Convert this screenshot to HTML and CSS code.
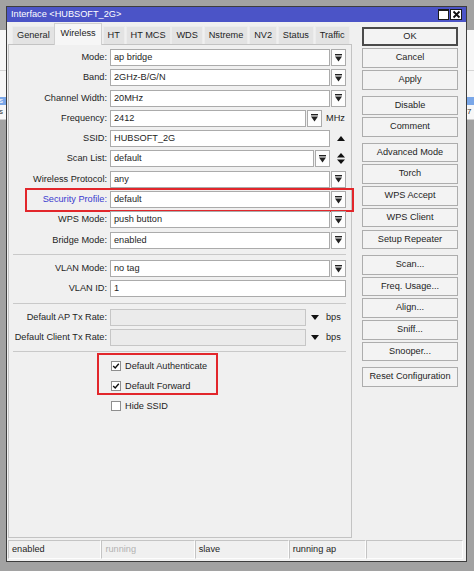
FILE: index.html
```html
<!DOCTYPE html>
<html>
<head>
<meta charset="utf-8">
<title>Interface &lt;HUBSOFT_2G&gt;</title>
<link rel="stylesheet" href="styles.css">
</head>
<body>
<div class="screen">
  <div class="bg bg-left">
    <div class="bg-top"></div>
    <div class="bg-list">
      <div class="bg-head"></div>
      <div class="bg-gap"></div>
      <div class="bg-sel">s</div>
      <div class="bg-row">s</div>
    </div>
    <div class="bg-rest"></div>
  </div>

  <div class="window">
    <div class="titlebar">
      <span class="title">Interface &lt;HUBSOFT_2G&gt;</span>
      <div class="tbtns">
        <span class="tbtn max"></span>
        <span class="tbtn close"><svg width="9" height="9" viewBox="0 0 9 9"><path d="M1.5 1.5 L7.5 7.5 M7.5 1.5 L1.5 7.5" stroke="#111" stroke-width="1.8"/></svg></span>
      </div>
    </div>

    <div class="content">
      <div class="main">
        <div class="tabs">
          <div class="tab">General</div>
          <div class="tab active">Wireless</div>
          <div class="tab">HT</div>
          <div class="tab">HT MCS</div>
          <div class="tab">WDS</div>
          <div class="tab">Nstreme</div>
          <div class="tab">NV2</div>
          <div class="tab">Status</div>
          <div class="tab">Traffic</div>
        </div>
        <div class="panel">
          <div class="group">
            <div class="row"><span class="lbl">Mode:</span><div class="field"><div class="input">ap bridge</div><div class="dd"><svg width="7" height="8" viewBox="0 0 7 8"><rect x="0" y="0" width="7" height="1.4" fill="#222"/><path d="M0 2.6 H7 L3.5 7.6 Z" fill="#222"/></svg></div></div></div>
            <div class="row"><span class="lbl">Band:</span><div class="field"><div class="input">2GHz-B/G/N</div><div class="dd"><svg width="7" height="8" viewBox="0 0 7 8"><rect x="0" y="0" width="7" height="1.4" fill="#222"/><path d="M0 2.6 H7 L3.5 7.6 Z" fill="#222"/></svg></div></div></div>
            <div class="row"><span class="lbl">Channel Width:</span><div class="field"><div class="input">20MHz</div><div class="dd"><svg width="7" height="8" viewBox="0 0 7 8"><rect x="0" y="0" width="7" height="1.4" fill="#222"/><path d="M0 2.6 H7 L3.5 7.6 Z" fill="#222"/></svg></div></div></div>
            <div class="row"><span class="lbl">Frequency:</span><div class="field"><div class="input">2412</div><div class="dd"><svg width="7" height="8" viewBox="0 0 7 8"><rect x="0" y="0" width="7" height="1.4" fill="#222"/><path d="M0 2.6 H7 L3.5 7.6 Z" fill="#222"/></svg></div><span class="unit">MHz</span></div></div>
            <div class="row"><span class="lbl">SSID:</span><div class="field"><div class="input">HUBSOFT_2G</div><div class="spin"><svg width="8" height="5" viewBox="0 0 8 5"><path d="M0 5 H8 L4 0 Z" fill="#111"/></svg></div></div></div>
            <div class="row"><span class="lbl">Scan List:</span><div class="field"><div class="input">default</div><div class="dd"><svg width="7" height="8" viewBox="0 0 7 8"><rect x="0" y="0" width="7" height="1.4" fill="#222"/><path d="M0 2.6 H7 L3.5 7.6 Z" fill="#222"/></svg></div><div class="spin"><svg width="8" height="11" viewBox="0 0 8 11"><path d="M0 4.5 H8 L4 0 Z M0 6.5 H8 L4 11 Z" fill="#111"/></svg></div></div></div>
            <div class="row"><span class="lbl">Wireless Protocol:</span><div class="field"><div class="input">any</div><div class="dd"><svg width="7" height="8" viewBox="0 0 7 8"><rect x="0" y="0" width="7" height="1.4" fill="#222"/><path d="M0 2.6 H7 L3.5 7.6 Z" fill="#222"/></svg></div></div></div>
            <div class="row"><span class="lbl link">Security Profile:</span><div class="field"><div class="input">default</div><div class="dd"><svg width="7" height="8" viewBox="0 0 7 8"><rect x="0" y="0" width="7" height="1.4" fill="#222"/><path d="M0 2.6 H7 L3.5 7.6 Z" fill="#222"/></svg></div></div><div class="mark mark-sec"></div></div>
            <div class="row"><span class="lbl">WPS Mode:</span><div class="field"><div class="input">push button</div><div class="dd"><svg width="7" height="8" viewBox="0 0 7 8"><rect x="0" y="0" width="7" height="1.4" fill="#222"/><path d="M0 2.6 H7 L3.5 7.6 Z" fill="#222"/></svg></div></div></div>
            <div class="row"><span class="lbl">Bridge Mode:</span><div class="field"><div class="input">enabled</div><div class="dd"><svg width="7" height="8" viewBox="0 0 7 8"><rect x="0" y="0" width="7" height="1.4" fill="#222"/><path d="M0 2.6 H7 L3.5 7.6 Z" fill="#222"/></svg></div></div></div>
          </div>
          <div class="sep"></div>
          <div class="group">
            <div class="row"><span class="lbl">VLAN Mode:</span><div class="field"><div class="input">no tag</div><div class="dd"><svg width="7" height="8" viewBox="0 0 7 8"><rect x="0" y="0" width="7" height="1.4" fill="#222"/><path d="M0 2.6 H7 L3.5 7.6 Z" fill="#222"/></svg></div></div></div>
            <div class="row"><span class="lbl">VLAN ID:</span><div class="field"><div class="input">1</div></div></div>
          </div>
          <div class="sep"></div>
          <div class="group">
            <div class="row"><span class="lbl">Default AP Tx Rate:</span><div class="field"><div class="input disabled"></div><div class="tri"><svg width="8" height="5" viewBox="0 0 8 5"><path d="M0 0 H8 L4 5 Z" fill="#111"/></svg></div><span class="unit">bps</span></div></div>
            <div class="row"><span class="lbl">Default Client Tx Rate:</span><div class="field"><div class="input disabled"></div><div class="tri"><svg width="8" height="5" viewBox="0 0 8 5"><path d="M0 0 H8 L4 5 Z" fill="#111"/></svg></div><span class="unit">bps</span></div></div>
          </div>
          <div class="sep"></div>
          <div class="checks">
            <div class="checks-marked">
              <div class="chk"><span class="box"><svg width="8" height="8" viewBox="0 0 8 8"><path d="M1.2 4 L3.2 6 L6.8 1.8" fill="none" stroke="#111" stroke-width="1.4"/></svg></span><span>Default Authenticate</span></div>
              <div class="chk"><span class="box"><svg width="8" height="8" viewBox="0 0 8 8"><path d="M1.2 4 L3.2 6 L6.8 1.8" fill="none" stroke="#111" stroke-width="1.4"/></svg></span><span>Default Forward</span></div>
              <div class="mark mark-chk"></div>
            </div>
            <div class="chk"><span class="box"></span><span>Hide SSID</span></div>
          </div>
        </div>
      </div>

      <div class="side">
        <div class="bgroup">
          <div class="btn default">OK</div>
          <div class="btn">Cancel</div>
          <div class="btn">Apply</div>
        </div>
        <div class="bgroup">
          <div class="btn">Disable</div>
          <div class="btn">Comment</div>
        </div>
        <div class="bgroup">
          <div class="btn">Advanced Mode</div>
          <div class="btn">Torch</div>
          <div class="btn">WPS Accept</div>
          <div class="btn">WPS Client</div>
          <div class="btn">Setup Repeater</div>
        </div>
        <div class="bgroup">
          <div class="btn">Scan...</div>
          <div class="btn">Freq. Usage...</div>
          <div class="btn">Align...</div>
          <div class="btn">Sniff...</div>
          <div class="btn">Snooper...</div>
        </div>
        <div class="bgroup">
          <div class="btn">Reset Configuration</div>
        </div>
      </div>
    </div>

    <div class="statusbar">
      <div class="cell c1">enabled</div>
      <div class="cell c2 dim">running</div>
      <div class="cell c3">slave</div>
      <div class="cell c4">running ap</div>
      <div class="cell c5"></div>
    </div>
  </div>

  <div class="bg bg-right">
    <div class="bg-top"></div>
    <div class="bg-list">
      <div class="bg-head"></div>
      <div class="bg-gap"></div>
      <div class="bg-sel"></div>
      <div class="bg-row">7</div>
    </div>
    <div class="bg-rest"></div>
  </div>
</div>
</body>
</html>
```

FILE: styles.css
```css
body {
  margin: 0;
  background: #a2a2a2;
  font-family: "Liberation Sans", Arial, sans-serif;
  font-size: 9.2px;
  color: #1e1e1e;
}

.screen {
  display: flex;
  width: 474px;
  height: 571px;
  overflow: hidden;
}

/* background window strips */
.bg {
  flex: none;
  display: flex;
  flex-direction: column;
  overflow: hidden;
}
.bg-left { width: 6px; }
.bg-right { width: 7px; }
.bg-top { flex: none; height: 30px; background: #a2a2a2; }
.bg-list {
  flex: none;
  background: #f7f7f7;
  display: flex;
  flex-direction: column;
  border-bottom: 1px solid #cfcfcf;
}
.bg-head { height: 40px; border-bottom: 1px solid #d4d4d4; }
.bg-gap { height: 26px; }
.bg-sel { height: 8px; line-height: 8px; font-size: 8px; background: #7aa7e8; color: #fff; overflow: hidden; }
.bg-row { height: 14px; line-height: 14px; font-size: 8px; color: #333; overflow: hidden; }
.bg-left .bg-sel, .bg-left .bg-row { text-indent: -1px; }
.bg-rest { flex: 1; background: #a2a2a2; }

/* window */
.window {
  flex: none;
  width: 461px;
  height: 556px;
  margin-top: 6px;
  box-sizing: border-box;
  border: 1px solid #3d3d3d;
  background: #f0f0f0;
  display: flex;
  flex-direction: column;
}

.titlebar {
  flex: none;
  height: 15px;
  background: #4b54c7;
  color: #fff;
  display: flex;
  align-items: center;
  justify-content: space-between;
  padding: 0 4px 0 4px;
}
.title { line-height: 15px; }
.tbtns { display: flex; gap: 1px; }
.tbtn {
  width: 11px;
  height: 11px;
  box-sizing: border-box;
  border: 1px solid #1a1a1a;
  background: #fff;
  display: flex;
  align-items: center;
  justify-content: center;
}
.tbtn.max { border-top-width: 2px; }
.tbtn.close { width: 12px; }

.content {
  flex: none;
  height: 516px;
  display: flex;
}

.main {
  flex: none;
  width: 346px;
  display: flex;
  flex-direction: column;
}

.tabs {
  flex: none;
  height: 22px;
  display: flex;
  align-items: flex-end;
  padding-left: 5px;
}
.tab {
  height: 18px;
  line-height: 17px;
  padding: 0 4px;
  margin-right: 0.8px;
  box-sizing: border-box;
  background: #e3e3e3;
  border: 1px solid #ececec;
  border-bottom: none;
  white-space: nowrap;
}
.tab.active {
  height: 22px;
  line-height: 19px;
  padding: 0 5px;
  margin: 0 0.8px -1px -1px;
  background: #f6f6f6;
  border-color: #d0d0d0;
  position: relative;
  z-index: 1;
}

.panel {
  flex: none;
  margin-left: 1px;
  width: 344px;
  height: 494px;
  box-sizing: border-box;
  border: 1px solid #c3c3c3;
  background: #f0f0f0;
  padding: 4px 5px 0 0;
}

.group {
  display: flex;
  flex-direction: column;
  gap: 3.3px;
}

.row {
  position: relative;
  display: grid;
  grid-template-columns: 98px 236px;
  column-gap: 3px;
  height: 17px;
}
.lbl {
  text-align: right;
  line-height: 17px;
  white-space: nowrap;
  color: #1e1e1e;
}
.lbl.link { color: #3a3acf; }

.field {
  display: flex;
  align-items: center;
  height: 17px;
}
.input {
  flex: 1;
  min-width: 0;
  height: 17px;
  box-sizing: border-box;
  border: 1px solid #ababab;
  background: #fff;
  padding-left: 3px;
  line-height: 15px;
  white-space: nowrap;
  overflow: hidden;
}
.input.disabled {
  background: #ebebeb;
  border-color: #c6c6c6;
}
.dd {
  flex: none;
  width: 15px;
  height: 17px;
  margin-left: 1px;
  box-sizing: border-box;
  border: 1px solid #ababab;
  background: #fdfdfd;
  display: flex;
  align-items: center;
  justify-content: center;
}
.spin {
  flex: none;
  width: 16px;
  height: 17px;
  display: flex;
  align-items: center;
  justify-content: flex-end;
  padding-right: 1px;
  box-sizing: border-box;
}
.tri {
  flex: none;
  width: 15px;
  margin-left: 1px;
  display: flex;
  align-items: center;
  justify-content: center;
}
.unit {
  flex: none;
  width: 20px;
  margin-left: 4px;
  line-height: 17px;
}

.sep {
  height: 0;
  border-top: 1px solid #c9c9c9;
  margin: 5.2px 0 5.2px 4px;
}

.checks {
  margin-left: 101px;
  display: flex;
  flex-direction: column;
  gap: 3.3px;
}
.checks-marked {
  position: relative;
  display: flex;
  flex-direction: column;
  gap: 3.3px;
}
.chk {
  height: 17px;
  display: flex;
  align-items: center;
  gap: 4px;
  white-space: nowrap;
}
.box {
  flex: none;
  width: 10px;
  height: 10px;
  margin-left: 1px;
  box-sizing: border-box;
  border: 1px solid #8e8e8e;
  background: #fff;
  display: flex;
  align-items: center;
  justify-content: center;
}

/* red annotation boxes */
.mark {
  position: absolute;
  box-sizing: border-box;
  border: 2px solid #e2262b;
  pointer-events: none;
}
.mark-sec {
  left: 16px;
  top: -3px;
  width: 329px;
  height: 24px;
}
.mark-chk {
  left: -13px;
  top: -4.5px;
  width: 121px;
  height: 42px;
}

/* side buttons */
.side {
  flex: none;
  width: 96px;
  margin-left: 9px;
  padding-top: 4.7px;
  display: flex;
  flex-direction: column;
  gap: 6px;
}
.bgroup {
  display: flex;
  flex-direction: column;
  gap: 2.2px;
}
.btn {
  height: 19.5px;
  box-sizing: border-box;
  border: 1px solid #adadad;
  background: #f3f3f3;
  text-align: center;
  line-height: 17.5px;
  white-space: nowrap;
}
.btn.default {
  border: 2px solid #4a4a4a;
  line-height: 15.5px;
}

/* status bar */
.statusbar {
  flex: none;
  display: flex;
  height: 19px;
  margin: 2px 3px 2px 1px;
}
.cell {
  box-sizing: border-box;
  height: 19px;
  border: 1px solid;
  border-color: #c4c4c4 #fdfdfd #fdfdfd #c4c4c4;
  padding-left: 3px;
  line-height: 17px;
  white-space: nowrap;
}
.cell.dim { color: #b2b2b2; }
.c1 { width: 93.4px; }
.c2 { width: 93.3px; }
.c3 { width: 94px; }
.c4 { width: 77.7px; }
.c5 { width: 96.3px; }
```
